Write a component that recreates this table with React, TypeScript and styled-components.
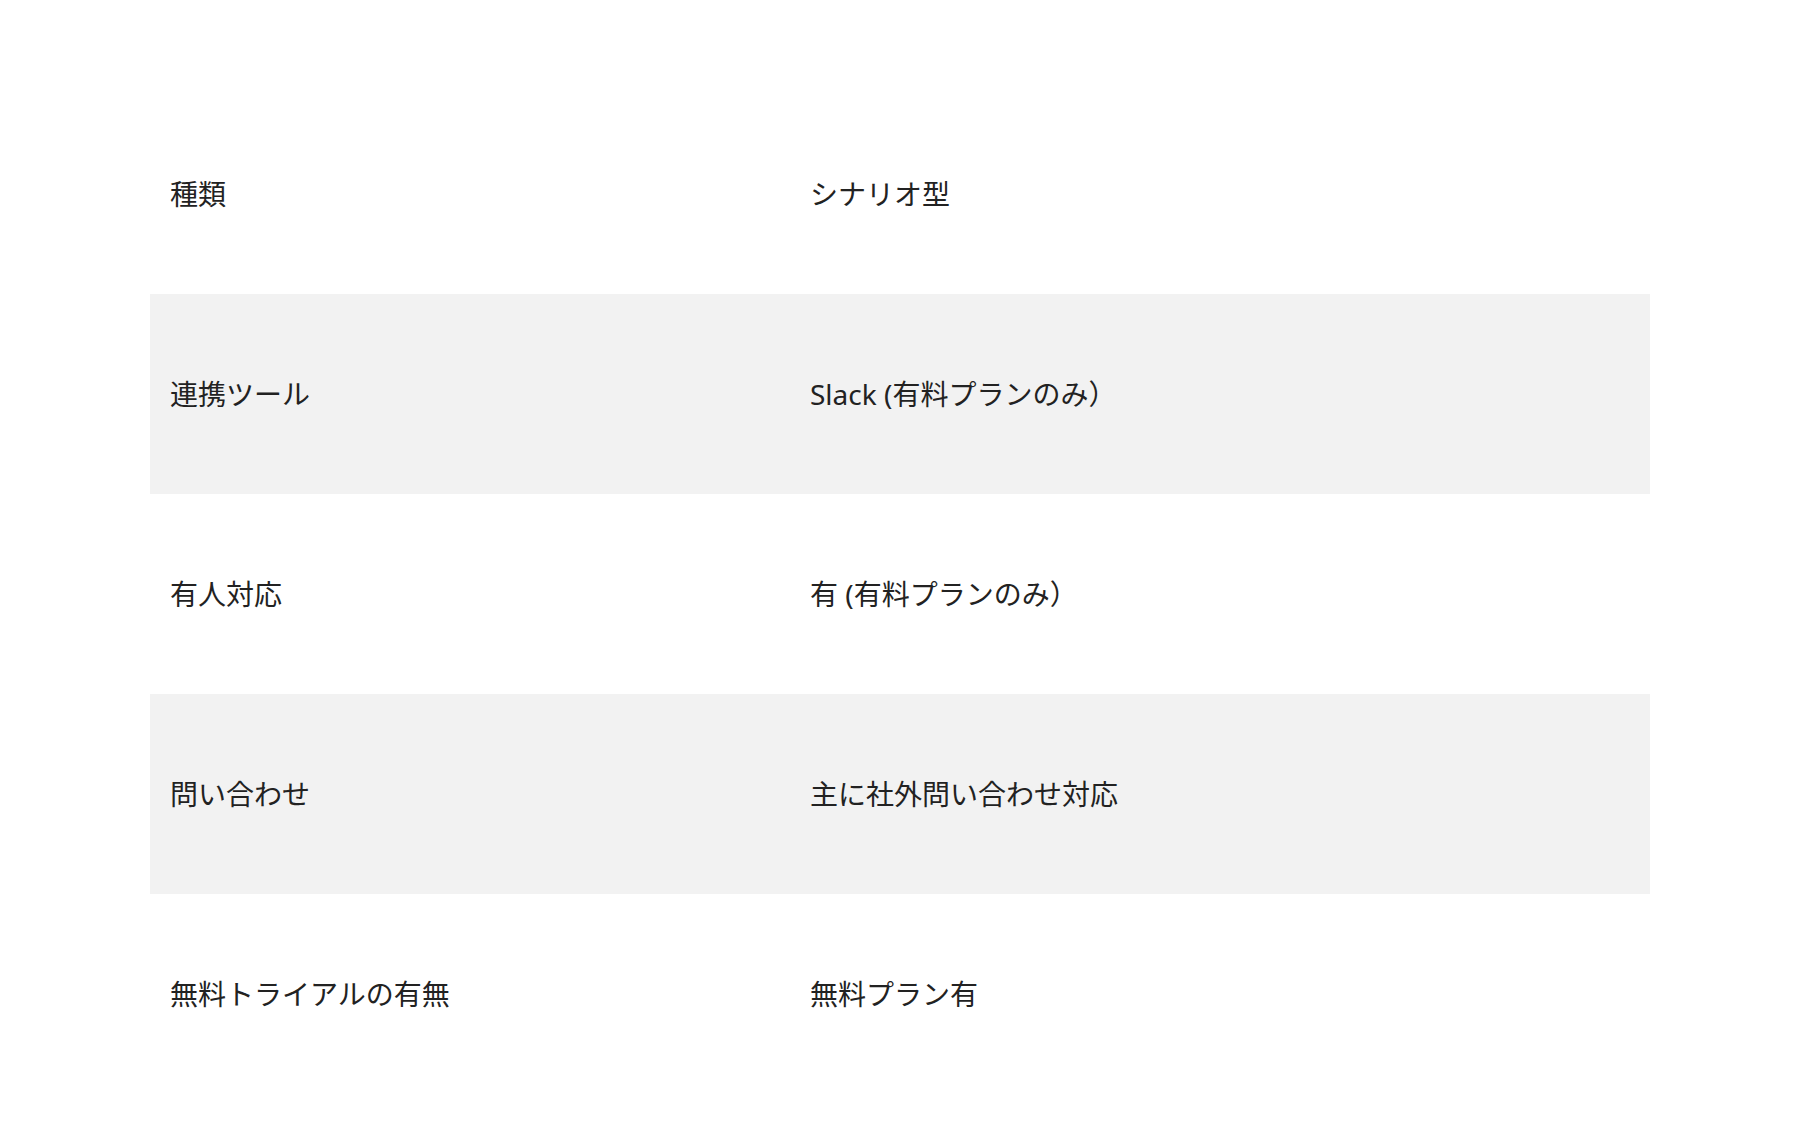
import styled, { createGlobalStyle } from "styled-components";

const GlobalStyle = createGlobalStyle`
    html, body {
        margin: 0;
        padding: 0;
        background: #ffffff;
    }
    body {
        font-family: "Noto Sans", "Noto Sans CJK JP", sans-serif;
        color: #222222;
    }
`;

const Wrapper = styled.div`
    display: flex;
    justify-content: center;
    padding: 94px 0 27px;
`;

const Table = styled.div`
    display: flex;
    flex-direction: column;
    width: 1500px;
`;

const Row = styled.div<{ $shaded: boolean }>`
    display: grid;
    grid-template-columns: 640px 1fr;
    align-items: center;
    height: 200px;
    background-color: ${(p) => (p.$shaded ? "#f2f2f2" : "transparent")};
`;

const Cell = styled.div`
    padding-left: 20px;
    font-size: 28px;
    line-height: 1.5;
    white-space: nowrap;
`;

const rows = [
    { label: "種類", value: "シナリオ型" },
    { label: "連携ツール", value: "Slack (有料プランのみ）" },
    { label: "有人対応", value: "有 (有料プランのみ）" },
    { label: "問い合わせ", value: "主に社外問い合わせ対応" },
    { label: "無料トライアルの有無", value: "無料プラン有" },
];

export default function App() {
    return (
        <>
            <GlobalStyle />
            <Wrapper>
                <Table>
                    {rows.map((row, index) => (
                        <Row key={row.label} $shaded={index % 2 === 1}>
                            <Cell>{row.label}</Cell>
                            <Cell>{row.value}</Cell>
                        </Row>
                    ))}
                </Table>
            </Wrapper>
        </>
    );
}
